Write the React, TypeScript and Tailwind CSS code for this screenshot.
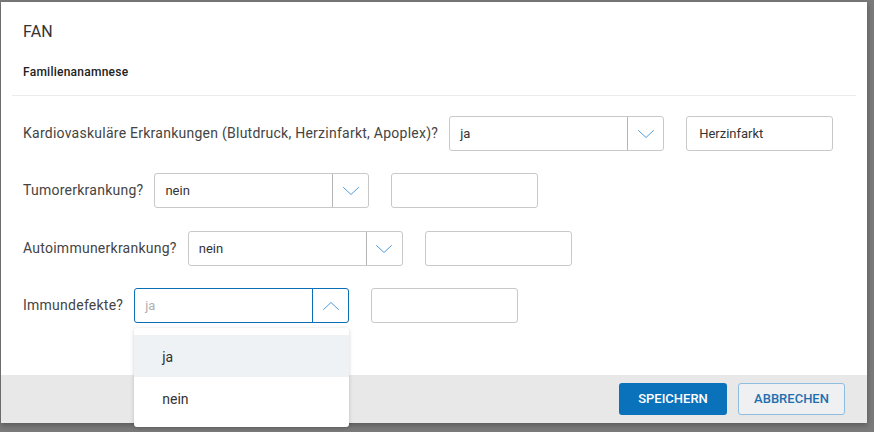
import React from "react";

const Chevron = ({ up }: { up?: boolean }) => (
  <svg width="18" height="10" viewBox="0 0 18 10" fill="none">
    <path
      d={up ? "M1.5 8.5 L9 1.5 L16.5 8.5" : "M1.5 1.5 L9 8.5 L16.5 1.5"}
      stroke="#4f9de0"
      strokeWidth="1"
      strokeLinecap="round"
      strokeLinejoin="round"
    />
  </svg>
);

const Select = ({
  value,
  placeholder,
  open,
}: {
  value?: string;
  placeholder?: string;
  open?: boolean;
}) => (
  <div className="relative">
    <div
      className={`flex h-[35px] w-[215px] rounded-[3px] bg-white ${
        open ? "border-[1.5px] border-[#0b6fb8]" : "border border-[#c9c9c9]"
      }`}
    >
      <div
        className={`flex flex-1 items-center pl-[10px] text-[13px] ${
          value ? "text-[#333]" : "text-[#b0b0b0]"
        }`}
      >
        {value ?? placeholder}
      </div>
      <div
        className={`flex w-[36px] items-center justify-center ${
          open ? "border-l-[1.5px] border-[#0b6fb8]" : "border-l border-[#b5b5b5]"
        }`}
      >
        <Chevron up={open} />
      </div>
    </div>
    {open && (
      <div className="absolute left-0 top-[40px] z-10 w-[215px] rounded-[3px] bg-white py-[7px] shadow-[0_1px_4px_rgba(0,0,0,0.18)]">
        <div className="flex h-[42px] items-center bg-[#eff2f5] pl-[28px] pt-[2px] text-[14px] text-[#333]">
          ja
        </div>
        <div className="flex h-[43px] items-center pl-[28px] pt-[2px] text-[14px] text-[#333]">
          nein
        </div>
      </div>
    )}
  </div>
);

const TextInput = ({ value }: { value?: string }) => (
  <div className="flex h-[35px] w-[147px] items-center rounded-[3px] border border-[#c9c9c9] bg-white pl-[12px] text-[13px] text-[#333]">
    {value}
  </div>
);

const Row = ({
  label,
  value,
  placeholder,
  open,
  text,
  mt,
}: {
  label: string;
  value?: string;
  placeholder?: string;
  open?: boolean;
  text?: string;
  mt: string;
}) => (
  <div className={`flex h-[35px] items-center ${mt}`}>
    <span className="mr-[11px] whitespace-nowrap text-[14px] tracking-[0.25px] text-[#444]">
      {label}
    </span>
    <Select value={value} placeholder={placeholder} open={open} />
    <div className="ml-[22px]">
      <TextInput value={text} />
    </div>
  </div>
);

export default function App() {
  return (
    <div
      className="h-[432px] w-[874px] overflow-hidden bg-[#7b7b7b] pl-[1px] pt-[2px]"
      style={{ fontFamily: "Roboto, 'Liberation Sans', sans-serif" }}
    >
      <div className="flex h-[421px] w-[866px] flex-col bg-white shadow-[0_2px_6px_rgba(0,0,0,0.3)]">
        <div className="flex flex-1 flex-col">
          <div className="pl-[22px] pt-[18px] text-[16px] leading-[24px] tracking-[0.2px] text-[#333]">
            FAN
          </div>
          <div className="pl-[22px] pt-[20px] text-[12px] font-medium leading-[16px] tracking-[0.25px] text-[#222]">
            Familienanamnese
          </div>
          <div className="mx-[11px] mt-[15px] h-px bg-[#ececec]" />
          <div className="flex flex-col pl-[22px] pt-[20px]">
            <Row
              mt="mt-0"
              label="Kardiovaskuläre Erkrankungen (Blutdruck, Herzinfarkt, Apoplex)?"
              value="ja"
              text="Herzinfarkt"
            />
            <Row mt="mt-[22px]" label="Tumorerkrankung?" value="nein" />
            <Row mt="mt-[23px]" label="Autoimmunerkrankung?" value="nein" />
            <Row mt="mt-[22px]" label="Immundefekte?" placeholder="ja" open />
          </div>
        </div>
        <div className="flex h-[48px] items-center justify-end gap-[11px] bg-[#e8e8e8] pr-[22px]">
          <button className="h-[32px] w-[108px] rounded-[3px] bg-[#0a72bb] text-[13px] font-medium text-white">
            SPEICHERN
          </button>
          <button className="h-[32px] w-[107px] rounded-[3px] border border-[#8fbde0] bg-[#eef0f2] text-[13px] font-medium text-[#1f6fae]">
            ABBRECHEN
          </button>
        </div>
      </div>
    </div>
  );
}
